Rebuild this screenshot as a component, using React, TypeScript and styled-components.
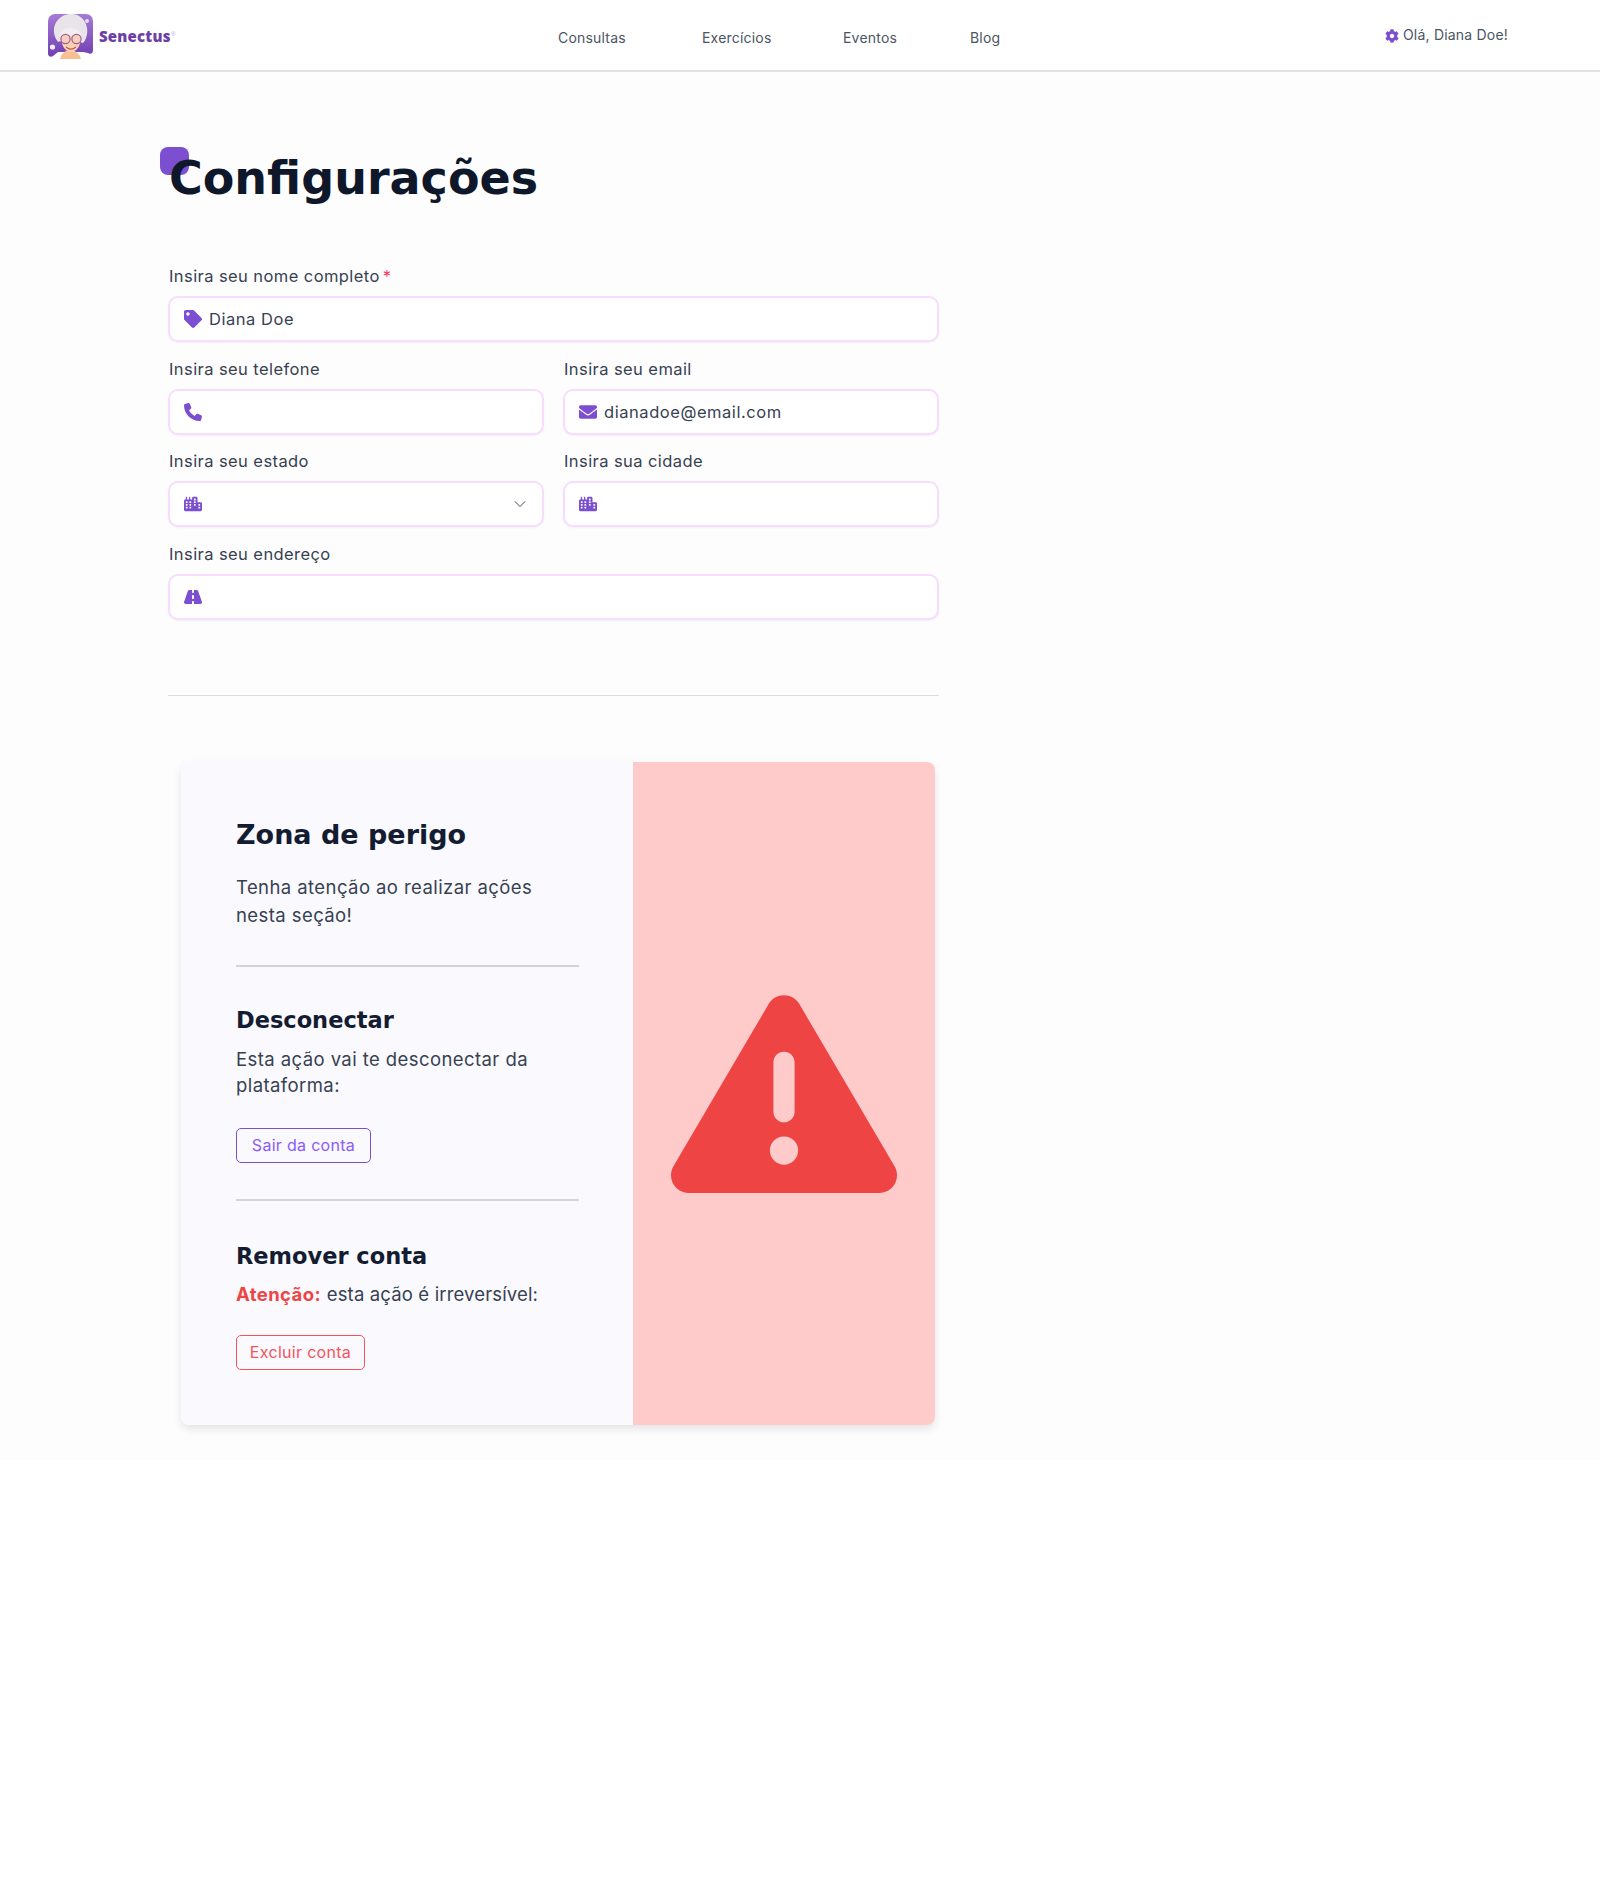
import React from "react";
import styled, { createGlobalStyle } from "styled-components";
import { FaCog, FaTag, FaEnvelope } from "react-icons/fa";
import { FaTriangleExclamation, FaCity, FaRoad, FaPhone } from "react-icons/fa6";
import { ChevronDown } from "lucide-react";

const Global = createGlobalStyle`
  html, body { margin: 0; padding: 0; background: #ffffff; }
  * { box-sizing: border-box; }
  body { font-family: Inter, "Liberation Sans", sans-serif; color: #374151; }
`;

const Header = styled.header`
  height: 72px;
  background: #fff;
  border-bottom: 2px solid #e2e2e4;
  display: grid;
  grid-template-columns: 558px 1fr auto;
  align-items: center;
  padding-right: 92px;
`;
const Brand = styled.div`
  display: flex;
  align-items: center;
  gap: 6px;
  padding-left: 48px;
  padding-top: 2px;
  svg { filter: blur(0.4px); }
`;
const BrandName = styled.span`
  font-family: "Open Sans", sans-serif;
  font-weight: 800;
  font-size: 15px;
  color: #6d3fa6;
  letter-spacing: 0.2px;
  sup { font-size: 6px; font-weight: 400; color: #c9b3e4; vertical-align: 6px; line-height: 0; }
`;
const Nav = styled.nav`
  display: grid;
  grid-template-columns: 144px 141px 127px auto;
  justify-content: start;
  padding-top: 4px;
`;
const NavLink = styled.a`
  font-size: 14px;
  letter-spacing: 0.2px;
  color: #4b5563;
`;
const User = styled.div`
  display: flex;
  align-items: center;
  gap: 4px;
  font-size: 14px;
  letter-spacing: 0.2px;
  color: #4b5563;
  margin-top: -1px;
  svg { color: #7c4fd0; font-size: 14px; margin-top: 2px; }
`;
const Main = styled.main`
  background: #fdfdfd;
  height: 1388px;
  padding: 77px 0 0 168px;
`;
const Column = styled.div`
  width: 771px;
`;
const TitleWrap = styled.div`
  position: relative;
  height: 115px;
`;
const TitleMark = styled.span`
  position: absolute;
  left: -8px;
  top: -2px;
  width: 29px;
  height: 28px;
  border-radius: 8px;
  background: #7c4fd0;
`;
const Title = styled.h1`
  position: relative;
  margin: 0;
  padding-left: 1px;
  font-family: "DejaVu Sans", sans-serif;
  font-weight: 700;
  font-size: 46px;
  line-height: 58px;
  color: #0f172a;
`;
const Form = styled.form`
  display: grid;
  grid-template-columns: 376px 376px;
  column-gap: 19px;
  row-gap: 14.5px;
`;
const Field = styled.div<{ $wide?: boolean }>`
  grid-column: ${(p) => (p.$wide ? "1 / -1" : "auto")};
`;
const Label = styled.label`
  display: block;
  font-size: 16.5px;
  line-height: 24px;
  letter-spacing: 0.42px;
  color: #374151;
  margin-bottom: 8px;
  padding-left: 1px;
`;
const Required = styled.span`
  color: #f43f5e;
  margin-left: 3px;
`;
const InputBox = styled.div`
  height: 46px;
  background: #fff;
  border: 2px solid #f8dcff;
  border-radius: 10px;
  box-shadow: 0 1px 2px rgba(0, 0, 0, 0.05);
  display: flex;
  align-items: center;
  padding: 0 14px;
  gap: 7px;
  font-size: 16.5px;
  letter-spacing: 0.55px;
  color: #374151;
  svg.lead { color: #7c4fd0; font-size: 18px; flex: none; }
`;
const Chevron = styled(ChevronDown)`
  margin-left: auto;
  margin-right: -2px;
  color: #6b7280;
`;
const Rule = styled.hr`
  margin: 75px 0 0;
  border: 0;
  height: 1px;
  background: #dcdcde;
`;
const DangerCard = styled.section`
  margin: 66px 0 0 13px;
  width: 754px;
  height: 663px;
  display: grid;
  grid-template-columns: 452px 302px;
  border-radius: 8px;
  overflow: hidden;
  box-shadow: 0 4px 8px rgba(0, 0, 0, 0.1);
`;
const DangerBody = styled.div`
  background: #f9f9fe;
  padding: 55px 54px 0 55px;
`;
const DangerAside = styled.div`
  background: #fecaca;
  display: flex;
  align-items: center;
  justify-content: center;
  padding-top: 1px;
  svg { color: #ef4444; font-size: 226px; }
`;
const H2 = styled.h2`
  margin: 0;
  font-family: "DejaVu Sans", sans-serif;
  font-weight: 700;
  font-size: 27px;
  line-height: 36px;
  color: #131c31;
`;
const H3 = styled.h3`
  margin: 0;
  font-family: "DejaVu Sans", sans-serif;
  font-weight: 700;
  font-size: 22.5px;
  line-height: 32px;
  color: #131c31;
`;
const Lead = styled.p`
  margin: 20px 0 0;
  max-width: 320px;
  font-size: 18.5px;
  line-height: 28px;
  letter-spacing: 0.42px;
  color: #374151;
`;
const Copy = styled.p<{ $gap: number }>`
  margin: ${(p) => p.$gap}px 0 0;
  font-size: 18.5px;
  line-height: 26px;
  letter-spacing: 0.42px;
  color: #374151;
`;
const Warn = styled.strong`
  color: #ef4444;
  font-weight: 700;
`;
const WarnRest = styled.span`
  letter-spacing: 0.15px;
`;
const Divider = styled.hr<{ $after: number }>`
  margin: 36px 0 ${(p) => p.$after}px;
  border: 0;
  height: 2px;
  background: #d4d4d8;
`;
const ActionButton = styled.button<{ $danger?: boolean; $top: number; $width: number }>`
  display: block;
  margin-top: ${(p) => p.$top}px;
  width: ${(p) => p.$width}px;
  height: 35px;
  padding: 0;
  background: transparent;
  border: 1px solid ${(p) => (p.$danger ? "#f4545a" : "#7c4fd0")};
  border-radius: 5px;
  color: ${(p) => (p.$danger ? "#f4545a" : "#8b5cf6")};
  font-family: Inter, sans-serif;
  font-size: 16px;
  letter-spacing: 0.3px;
`;

function Logo() {
  return (
    <svg width="45" height="45" viewBox="0 0 45 45" aria-hidden="true">
      <defs>
        <linearGradient id="lg" x1="0" y1="0" x2="0" y2="1">
          <stop offset="0" stopColor="#a57bd6" />
          <stop offset="1" stopColor="#6f3fb0" />
        </linearGradient>
      </defs>
      <path d="M7 0h31a7 7 0 0 1 7 7v30a3 3 0 0 1-5 2l-5-1H10l-5 4a3 3 0 0 1-5-2V7a7 7 0 0 1 7-7z" fill="url(#lg)" />
      <circle cx="39" cy="7" r="2" fill="#e9dcf7" />
      <circle cx="4.5" cy="33" r="2.6" fill="#f5eefc" />
      <path d="M12 45c1-5 5-9 10-9s10 4 11 9z" fill="#f8bf95" />
      <path d="M6 18C5 9 12 1 21 0c10-1 17 6 18 14 1 6-1 12-4 15-2-2-23-3-25-1-2-3-4-6-4-10z" fill="#e8e4ea" />
      <path d="M13 22c0 9 4 16 10 16s10-7 10-16z" fill="#fbd1b2" />
      <path d="M11 23c2-7 8-10 13-9 5 1 9 4 10 9-7-3-16-3-23 0z" fill="#f1eef3" />
      <circle cx="17.5" cy="25" r="4.6" fill="#f6cfc0" stroke="#a0608a" strokeWidth="1.2" />
      <circle cx="28.5" cy="25" r="4.6" fill="#f6cfc0" stroke="#a0608a" strokeWidth="1.2" />
      <path d="M18 33c3 2.5 7 2.5 10 0" stroke="#b5605a" strokeWidth="1.2" fill="none" />
    </svg>
  );
}

export default function App() {
  return (
    <>
      <Global />
      <Header>
        <Brand>
          <Logo />
          <BrandName>Senectus<sup>®</sup></BrandName>
        </Brand>
        <Nav>
          <NavLink>Consultas</NavLink>
          <NavLink>Exercícios</NavLink>
          <NavLink>Eventos</NavLink>
          <NavLink>Blog</NavLink>
        </Nav>
        <User>
          <FaCog />
          Olá, Diana Doe!
        </User>
      </Header>
      <Main>
        <Column>
          <TitleWrap>
            <TitleMark />
            <Title>Configurações</Title>
          </TitleWrap>
          <Form>
            <Field $wide>
              <Label>Insira seu nome completo<Required>*</Required></Label>
              <InputBox><FaTag className="lead" />Diana Doe</InputBox>
            </Field>
            <Field>
              <Label>Insira seu telefone</Label>
              <InputBox><FaPhone className="lead" /></InputBox>
            </Field>
            <Field>
              <Label>Insira seu email</Label>
              <InputBox><FaEnvelope className="lead" />dianadoe@email.com</InputBox>
            </Field>
            <Field>
              <Label>Insira seu estado</Label>
              <InputBox><FaCity className="lead" /><Chevron size={20} strokeWidth={1.25} /></InputBox>
            </Field>
            <Field>
              <Label>Insira sua cidade</Label>
              <InputBox><FaCity className="lead" /></InputBox>
            </Field>
            <Field $wide>
              <Label>Insira seu endereço</Label>
              <InputBox><FaRoad className="lead" /></InputBox>
            </Field>
          </Form>
          <Rule />
          <DangerCard>
            <DangerBody>
              <H2>Zona de perigo</H2>
              <Lead>Tenha atenção ao realizar ações nesta seção!</Lead>
              <Divider $after={37} />
              <H3>Desconectar</H3>
              <Copy $gap={10}>Esta ação vai te desconectar da plataforma:</Copy>
              <ActionButton type="button" $top={30} $width={135}>Sair da conta</ActionButton>
              <Divider $after={39} />
              <H3>Remover conta</H3>
              <Copy $gap={9}><Warn>Atenção:</Warn> <WarnRest>esta ação é irreversível:</WarnRest></Copy>
              <ActionButton type="button" $danger $top={28} $width={129}>Excluir conta</ActionButton>
            </DangerBody>
            <DangerAside>
              <FaTriangleExclamation />
            </DangerAside>
          </DangerCard>
        </Column>
      </Main>
    </>
  );
}
